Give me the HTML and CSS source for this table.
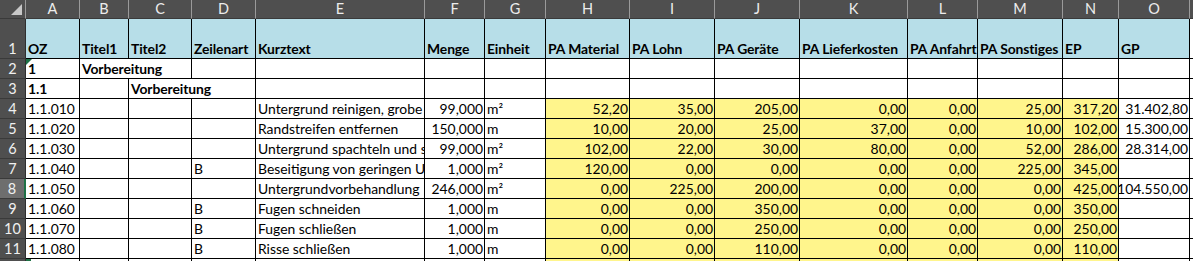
FILE: index.html
```html
<!DOCTYPE html>
<html lang="de">
<head>
<meta charset="utf-8">
<title>Kalkulation</title>
<link rel="stylesheet" href="styles.css">
</head>
<body>
<div class="sheet">
  <div class="row hdr">
    <div class="corner"><svg width="25" height="18" viewBox="0 0 25 18"><polygon points="22,4 22,15 11,15" fill="#c8c8c8"/></svg></div>
    <div class="ch">A</div><div class="ch">B</div><div class="ch">C</div><div class="ch">D</div><div class="ch">E</div><div class="ch">F</div><div class="ch">G</div><div class="ch">H</div><div class="ch">I</div><div class="ch">J</div><div class="ch">K</div><div class="ch">L</div><div class="ch">M</div><div class="ch">N</div><div class="ch">O</div><div class="ch last"></div>
  </div>

  <div class="row r1">
    <div class="rh">1</div>
    <div class="c b blue">OZ</div><div class="c b blue">Titel1</div><div class="c b blue">Titel2</div><div class="c b blue">Zeilenart</div><div class="c b blue">Kurztext</div><div class="c b blue">Menge</div><div class="c b blue">Einheit</div><div class="c b blue">PA Material</div><div class="c b blue">PA Lohn</div><div class="c b blue">PA Geräte</div><div class="c b blue">PA Lieferkosten</div><div class="c b blue">PA Anfahrt</div><div class="c b blue">PA Sonstiges</div><div class="c b blue">EP</div><div class="c b blue">GP</div><div class="c x"></div>
  </div>

  <div class="row">
    <div class="rh">2</div>
    <div class="c b flag">1</div><div class="c b span2">Vorbereitung</div><div class="c"></div><div class="c"></div><div class="c"></div><div class="c"></div><div class="c"></div><div class="c"></div><div class="c"></div><div class="c"></div><div class="c"></div><div class="c"></div><div class="c"></div><div class="c"></div><div class="c x"></div>
  </div>

  <div class="row">
    <div class="rh">3</div>
    <div class="c b">1.1</div><div class="c"></div><div class="c b span2">Vorbereitung</div><div class="c"></div><div class="c"></div><div class="c"></div><div class="c"></div><div class="c"></div><div class="c"></div><div class="c"></div><div class="c"></div><div class="c"></div><div class="c"></div><div class="c"></div><div class="c x"></div>
  </div>

  <div class="row">
    <div class="rh">4</div>
    <div class="c">1.1.010</div><div class="c"></div><div class="c"></div><div class="c"></div><div class="c">Untergrund reinigen, grobe Verschmutzungen entfernen</div><div class="c n">99,000</div><div class="c">m²</div>
    <div class="c n y">52,20</div><div class="c n y">35,00</div><div class="c n y">205,00</div><div class="c n y">0,00</div><div class="c n y">0,00</div><div class="c n y">25,00</div><div class="c n y">317,20</div><div class="c n">31.402,80</div><div class="c x"></div>
  </div>

  <div class="row">
    <div class="rh">5</div>
    <div class="c">1.1.020</div><div class="c"></div><div class="c"></div><div class="c"></div><div class="c">Randstreifen entfernen</div><div class="c n">150,000</div><div class="c">m</div>
    <div class="c n y">10,00</div><div class="c n y">20,00</div><div class="c n y">25,00</div><div class="c n y">37,00</div><div class="c n y">0,00</div><div class="c n y">10,00</div><div class="c n y">102,00</div><div class="c n">15.300,00</div><div class="c x"></div>
  </div>

  <div class="row">
    <div class="rh">6</div>
    <div class="c">1.1.030</div><div class="c"></div><div class="c"></div><div class="c"></div><div class="c">Untergrund spachteln und schleifen</div><div class="c n">99,000</div><div class="c">m²</div>
    <div class="c n y">102,00</div><div class="c n y">22,00</div><div class="c n y">30,00</div><div class="c n y">80,00</div><div class="c n y">0,00</div><div class="c n y">52,00</div><div class="c n y">286,00</div><div class="c n">28.314,00</div><div class="c x"></div>
  </div>

  <div class="row">
    <div class="rh">7</div>
    <div class="c">1.1.040</div><div class="c"></div><div class="c"></div><div class="c">B</div><div class="c">Beseitigung von geringen Unebenheiten</div><div class="c n">1,000</div><div class="c">m²</div>
    <div class="c n y">120,00</div><div class="c n y">0,00</div><div class="c n y">0,00</div><div class="c n y">0,00</div><div class="c n y">0,00</div><div class="c n y">225,00</div><div class="c n y">345,00</div><div class="c n"></div><div class="c x"></div>
  </div>

  <div class="row">
    <div class="rh sel">8</div>
    <div class="c">1.1.050</div><div class="c"></div><div class="c"></div><div class="c"></div><div class="c">Untergrundvorbehandlung</div><div class="c n">246,000</div><div class="c">m²</div>
    <div class="c n y">0,00</div><div class="c n y">225,00</div><div class="c n y">200,00</div><div class="c n y">0,00</div><div class="c n y">0,00</div><div class="c n y">0,00</div><div class="c n y">425,00</div><div class="c n">104.550,00</div><div class="c x"></div>
  </div>

  <div class="row">
    <div class="rh">9</div>
    <div class="c">1.1.060</div><div class="c"></div><div class="c"></div><div class="c">B</div><div class="c">Fugen schneiden</div><div class="c n">1,000</div><div class="c">m</div>
    <div class="c n y">0,00</div><div class="c n y">0,00</div><div class="c n y">350,00</div><div class="c n y">0,00</div><div class="c n y">0,00</div><div class="c n y">0,00</div><div class="c n y">350,00</div><div class="c n"></div><div class="c x"></div>
  </div>

  <div class="row">
    <div class="rh">10</div>
    <div class="c">1.1.070</div><div class="c"></div><div class="c"></div><div class="c">B</div><div class="c">Fugen schließen</div><div class="c n">1,000</div><div class="c">m</div>
    <div class="c n y">0,00</div><div class="c n y">0,00</div><div class="c n y">250,00</div><div class="c n y">0,00</div><div class="c n y">0,00</div><div class="c n y">0,00</div><div class="c n y">250,00</div><div class="c n"></div><div class="c x"></div>
  </div>

  <div class="row">
    <div class="rh">11</div>
    <div class="c">1.1.080</div><div class="c"></div><div class="c"></div><div class="c">B</div><div class="c">Risse schließen</div><div class="c n">1,000</div><div class="c">m</div>
    <div class="c n y">0,00</div><div class="c n y">0,00</div><div class="c n y">110,00</div><div class="c n y">0,00</div><div class="c n y">0,00</div><div class="c n y">0,00</div><div class="c n y">110,00</div><div class="c n"></div><div class="c x"></div>
  </div>

  <div class="row">
    <div class="rh">12</div>
    <div class="c flagb"></div><div class="c"></div><div class="c"></div><div class="c"></div><div class="c"></div><div class="c"></div><div class="c"></div>
    <div class="c y"></div><div class="c y"></div><div class="c y"></div><div class="c y"></div><div class="c y"></div><div class="c y"></div><div class="c y"></div><div class="c"></div><div class="c x"></div>
  </div>
</div>
</body>
</html>
```

FILE: styles.css
```css
html, body {
  margin: 0;
  padding: 0;
  background: #ffffff;
}

.sheet {
  width: 1193px;
  height: 261px;
  overflow: hidden;
  font-family: "Lato", "Liberation Sans", sans-serif;
  font-size: 13.9px;
  color: #000;
}

.row {
  display: grid;
  grid-template-columns: 26px 54px 49px 63px 64px 169px 60px 61px 84px 85px 85px 108px 70px 85px 56px 71px 1fr;
  height: 20px;
}

.row.hdr { height: 19px; }
.row.r1 { height: 40px; }

.corner {
  background: #4f4f4f;
  border-right: 1px solid #9a9a9a;
  border-bottom: 1px solid #3a3a3a;
  box-sizing: border-box;
  display: flex;
}

.ch {
  background: #4f4f4f;
  color: #ececec;
  border-right: 1px solid #9a9a9a;
  border-bottom: 1px solid #3a3a3a;
  box-sizing: border-box;
  text-align: center;
  font-size: 14.5px;
  line-height: 18px;
}
.ch.last { border-right: none; }

.rh {
  background: #4f4f4f;
  color: #f0f0f0;
  border-right: 1px solid #2f2f2f;
  border-bottom: 1px solid #3a3a3a;
  box-sizing: border-box;
  display: flex;
  align-items: flex-end;
  justify-content: center;
  line-height: 18px;
  font-size: 14.5px;
}
.rh.sel {
  background: #6e6e6e;
  border-right: 2px solid #1e7145;
}

.c {
  position: relative;
  border-right: 1px solid #000;
  border-bottom: 1px solid #000;
  box-sizing: border-box;
  padding: 0 2px 0 2px;
  white-space: nowrap;
  overflow: hidden;
  display: flex;
  align-items: flex-end;
  line-height: 18px;
}
.c.b { font-weight: bold; letter-spacing: -0.1px; }
.c.n { justify-content: flex-end; padding-right: 1px; }
.c.blue { background: #b7dee8; }
.c.y { background: #fff58c; }
.c.x { border-right: none; }
.span2 { grid-column: span 2; }

.flag::before {
  content: "";
  position: absolute;
  left: 0;
  top: 0;
  border-top: 6px solid #1e7145;
  border-right: 6px solid transparent;
}
.flagb::before {
  content: "";
  position: absolute;
  left: 0;
  top: 0;
  width: 5px;
  height: 3px;
  background: #1e7145;
}
```
